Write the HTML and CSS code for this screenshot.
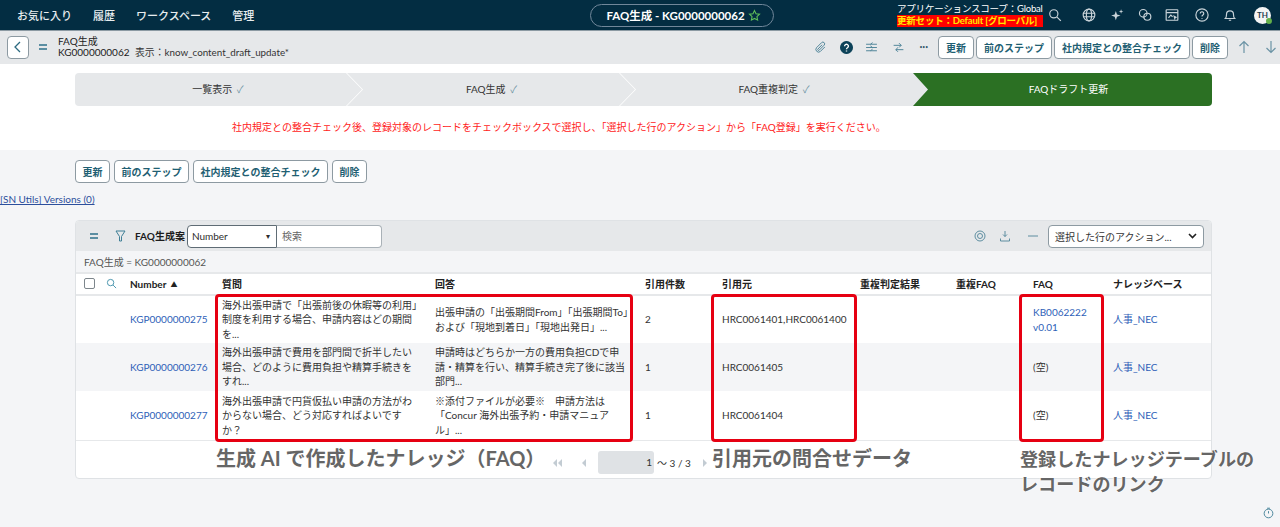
FILE: index.html
```html
<!DOCTYPE html>
<html lang="ja">
<head>
    <meta charset="UTF-8">
    <title>FAQ生成 - KG0000000062</title>
    <link rel="stylesheet" href="styles.css">
</head>
<body>

    <!-- Top nav -->
    <header class="top-nav">
        <nav class="nav-menu">
            <span>お気に入り</span>
            <span>履歴</span>
            <span>ワークスペース</span>
            <span>管理</span>
        </nav>
        <div class="nav-pill">
            FAQ生成 - KG0000000062
            <svg class="pill-star" width="13" height="13" viewBox="0 0 24 24"><path d="M12 3l2.800 5.900 6.400.8-4.700 4.400 1.200 6.400L12 17.400l-5.700 3.100 1.200-6.400-4.700-4.400 6.400-.8z"/></svg>
        </div>
        <div class="nav-scope">
            <div>アプリケーションスコープ：Global</div>
            <div class="scope-set">更新セット：Default [グローバル]</div>
        </div>
        <div class="nav-icons">
            <svg width="14" height="14" viewBox="0 0 24 24"><circle cx="10" cy="10" r="7"/><path d="M15.500 15.500L22 22"/></svg>
            <svg class="ml-20" width="14" height="14" viewBox="0 0 24 24"><circle cx="12" cy="12" r="10"/><ellipse cx="12" cy="12" rx="4.500" ry="10"/><path d="M2 9h20M2 15h20"/></svg>
            <svg class="ml-14" width="14" height="14" viewBox="0 0 24 24"><path class="solid" d="M10 5l2 6 6 2-6 2-2 6-2-6-6-2 6-2zM19 2l1 3 3 1-3 1-1 3-1-3-3-1 3-1z"/></svg>
            <svg class="ml-14" width="14" height="14" viewBox="0 0 24 24"><circle cx="9" cy="9" r="6.500"/><circle cx="16" cy="15" r="6"/></svg>
            <svg class="ml-13" width="14" height="14" viewBox="0 0 24 24"><rect x="2" y="3" width="20" height="18" rx="1"/><path d="M2 8h20M6 17l4-5 3 3"/><path class="solid" d="M14 12l7 4-3 1.500-1.500 3.500z"/></svg>
            <svg class="ml-16" width="14" height="14" viewBox="0 0 24 24"><circle cx="12" cy="12" r="10.500"/><path d="M9 9.500a3 3 0 1 1 4.500 2.600c-1 .6-1.500 1.200-1.500 2.400M12 17v1.500"/></svg>
            <svg class="ml-14" width="14" height="14" viewBox="0 0 24 24"><path d="M4 18c2-2 2-4 2-7a6 6 0 0 1 12 0c0 3 0 5 2 7zM10 21h4"/></svg>
            <div class="avatar">TH<i class="avatar-dot"></i></div>
        </div>
    </header>

    <!-- Record header -->
    <div class="sub-header">
        <button class="back-btn">
            <svg width="10" height="12" viewBox="0 0 10 12"><path d="M7 1L2 6l5 5"/></svg>
        </button>
        <div class="bars"><i></i><i></i></div>
        <div class="record-title">
            <div>FAQ生成</div>
            <div>KG0000000062 <span class="view-name">表示：know_content_draft_update*</span></div>
        </div>
        <div class="sub-actions">
            <svg class="tool" width="13" height="13" viewBox="0 0 24 24"><path d="M20 11l-8.500 8.500a5 5 0 0 1-7-7L14 3a3.300 3.300 0 0 1 4.700 4.700L9.500 17a1.500 1.500 0 0 1-2.200-2.200L15 7"/></svg>
            <svg class="help ml-13" width="13" height="13" viewBox="0 0 24 24"><circle cx="12" cy="12" r="11"/><path class="help-q" d="M8.500 9.500a3.500 3.500 0 1 1 5.300 3c-1.200.7-1.800 1.200-1.800 2.500M12 17.500v2"/></svg>
            <svg class="tool ml-12" width="13" height="13" viewBox="0 0 24 24"><path d="M2 6h20M2 12h20M2 18h20M14 3l-4 3M10 9l4 3M14 15l-4 3"/></svg>
            <svg class="tool ml-14" width="13" height="13" viewBox="0 0 24 24"><path d="M3 8h14M13 4l4 4-4 4M21 16H7M11 12l-4 4 4 4"/></svg>
            <span class="dots ml-14">•••</span>
            <div class="btn-row sub-buttons ml-10">
                <button class="btn">更新</button>
                <button class="btn">前のステップ</button>
                <button class="btn">社内規定との整合チェック</button>
                <button class="btn">削除</button>
            </div>
            <svg class="tool arrow ml-10" width="12" height="14" viewBox="0 0 12 14"><path d="M6 13V2M1.500 6L6 1.500 10.500 6"/></svg>
            <svg class="tool arrow ml-15" width="12" height="14" viewBox="0 0 12 14"><path d="M6 1v11M1.500 8L6 12.500 10.500 8"/></svg>
        </div>
    </div>

    <!-- Stepper and message -->
    <section class="step-area">
        <div class="stepper">
            <div class="step step-1">一覧表示 <span class="check">✓</span></div>
            <div class="step step-2">FAQ生成 <span class="check">✓</span></div>
            <div class="step step-3">FAQ重複判定 <span class="check">✓</span></div>
            <div class="step step-4">FAQドラフト更新</div>
        </div>
        <p class="notice">社内規定との整合チェック後、登録対象のレコードをチェックボックスで選択し、「選択した行のアクション」から「FAQ登録」を実行ください。</p>
    </section>

    <main class="content">
        <div class="btn-row form-buttons">
            <button class="btn">更新</button>
            <button class="btn">前のステップ</button>
            <button class="btn">社内規定との整合チェック</button>
            <button class="btn">削除</button>
        </div>
        <a class="utils-link">[SN Utils] Versions (0)</a>

        <!-- FAQ list -->
        <div class="panel">
            <div class="panel-head">
                <div class="bars"><i></i><i></i></div>
                <svg class="filter-icon" width="11" height="12" viewBox="0 0 11 12"><path d="M1 1h9L6.500 6.500V11h-2V6.500z"/></svg>
                <strong class="panel-title">FAQ生成案</strong>
                <div class="search-group">
                    <div class="search-field">Number<span class="caret">▾</span></div>
                    <div class="search-input">検索</div>
                </div>
                <div class="head-tools">
                    <svg class="tool" width="12" height="12" viewBox="0 0 24 24"><circle cx="12" cy="12" r="10"/><circle cx="12" cy="12" r="5"/></svg>
                    <svg class="tool ml-13" width="12" height="12" viewBox="0 0 24 24"><path d="M12 2v11M8 9l4 4 4-4M3 17v5h18v-5"/></svg>
                    <svg class="tool ml-16" width="12" height="12" viewBox="0 0 24 24"><path d="M2 12h20"/></svg>
                    <div class="action-select">選択した行のアクション...<svg width="9" height="6" viewBox="0 0 9 6"><path d="M1 1l3.500 3.500L8 1"/></svg></div>
                </div>
            </div>
            <div class="crumb">FAQ生成 = KG0000000062</div>
            <table class="faq-table">
                <colgroup>
                    <col class="c-check"><col class="c-num"><col class="c-q"><col class="c-a"><col class="c-count">
                    <col class="c-src"><col class="c-dup"><col class="c-dupfaq"><col class="c-faq"><col class="c-kb">
                </colgroup>
                <thead>
                    <tr>
                        <th>
                            <div class="head-check">
                                <i class="checkbox"></i>
                                <svg width="11" height="11" viewBox="0 0 24 24"><circle cx="10" cy="10" r="7"/><path d="M15.500 15.500L22 22"/></svg>
                            </div>
                        </th>
                        <th>Number <span class="sort">▲</span></th>
                        <th>質問</th>
                        <th>回答</th>
                        <th>引用件数</th>
                        <th>引用元</th>
                        <th>重複判定結果</th>
                        <th>重複FAQ</th>
                        <th>FAQ</th>
                        <th>ナレッジベース</th>
                    </tr>
                </thead>
                <tbody>
                    <tr>
                        <td></td>
                        <td><a>KGP0000000275</a></td>
                        <td class="cell-q">海外出張申請で「出張前後の休暇等の利用」制度を利用する場合、申請内容はどの期間を...</td>
                        <td>出張申請の「出張期間From」「出張期間To」および「現地到着日」「現地出発日」...</td>
                        <td>2</td>
                        <td>HRC0061401,HRC0061400</td>
                        <td></td>
                        <td></td>
                        <td><a>KB0062222<br>v0.01</a></td>
                        <td><a>人事_NEC</a></td>
                    </tr>
                    <tr>
                        <td></td>
                        <td><a>KGP0000000276</a></td>
                        <td class="cell-q">海外出張申請で費用を部門間で折半したい場合、どのように費用負担や精算手続きをすれ...</td>
                        <td>申請時はどちらか一方の費用負担CDで申請・精算を行い、精算手続き完了後に該当部門...</td>
                        <td>1</td>
                        <td>HRC0061405</td>
                        <td></td>
                        <td></td>
                        <td>(空)</td>
                        <td><a>人事_NEC</a></td>
                    </tr>
                    <tr>
                        <td></td>
                        <td><a>KGP0000000277</a></td>
                        <td class="cell-q">海外出張申請で円貨仮払い申請の方法がわからない場合、どう対応すればよいですか？</td>
                        <td>※添付ファイルが必要※　申請方法は「Concur 海外出張予約・申請マニュアル」...</td>
                        <td>1</td>
                        <td>HRC0061404</td>
                        <td></td>
                        <td></td>
                        <td>(空)</td>
                        <td><a>人事_NEC</a></td>
                    </tr>
                </tbody>
            </table>
            <div class="pager">
                <svg width="9" height="8" viewBox="0 0 9 8"><path d="M4 0v8L0 4zM9 0v8L5 4z"/></svg>
                <svg class="ml-20" width="4" height="8" viewBox="0 0 4 8"><path d="M4 0v8L0 4z"/></svg>
                <div class="pager-input">1</div>
                <span class="pager-range">～ 3 / 3</span>
                <svg class="ml-12" width="4" height="8" viewBox="0 0 4 8"><path d="M0 0v8l4-4z"/></svg>
            </div>
        </div>
    </main>

    <!-- Annotations drawn over the screenshot -->
    <div class="mark mark-qa"></div>
    <div class="mark mark-src"></div>
    <div class="mark mark-faq"></div>
    <div class="note note-qa">生成 AI で作成したナレッジ（FAQ）</div>
    <div class="note note-src">引用元の問合せデータ</div>
    <div class="note note-faq">登録したナレッジテーブルの<br>レコードのリンク</div>

    <svg class="timer" width="11" height="12" viewBox="0 0 24 24"><circle cx="12" cy="13" r="9.500"/><path d="M12 8v5M9 1.500h6"/></svg>

</body>
</html>
```

FILE: styles.css
```css
* {
    box-sizing: border-box;
}

html, body {
    margin: 0;
    height: 527px;
    overflow: hidden;
}

body {
    position: relative;
    background: #f4f5f7;
    color: #2e2e2e;
    font-family: Lato, "Noto Sans CJK JP", sans-serif;
    font-size: 10px;
}

svg {
    fill: none;
    stroke: currentColor;
    stroke-width: 2;
    flex: none;
}

.ml-10 { margin-left: 10px; }
.ml-12 { margin-left: 12px; }
.ml-13 { margin-left: 13px; }
.ml-14 { margin-left: 14px; }
.ml-15 { margin-left: 15px; }
.ml-16 { margin-left: 16px; }
.ml-20 { margin-left: 20px; }

/* Top nav */
.top-nav {
    height: 31px;
    background: #032d42;
    color: #e8edf0;
    display: flex;
    align-items: center;
    border-bottom: 1px solid #8c9aa3;
}

.nav-menu {
    width: 590px;
    padding-left: 17px;
    display: flex;
    gap: 21px;
    font-size: 11px;
    font-weight: 500;
}

.nav-pill {
    width: 184px;
    height: 23px;
    padding-left: 3px;
    border: 1px solid #71879a;
    border-radius: 12px;
    display: flex;
    align-items: center;
    justify-content: center;
    gap: 3px;
    color: #fff;
    font-size: 11.500px;
    font-weight: 700;
}

.pill-star {
    color: #5fbf5a;
}

.nav-scope {
    width: 146px;
    margin-left: 123px;
    font-size: 9.500px;
    letter-spacing: -0.2px;
    line-height: 12px;
    color: #fff;
    white-space: nowrap;
}

.scope-set {
    background: #ff0000;
    color: #ffe600;
    font-weight: 700;
}

.nav-icons {
    display: flex;
    align-items: center;
    margin-left: 5px;
    color: #c9d3d9;
}

.nav-icons .solid {
    fill: currentColor;
    stroke: none;
}

.avatar {
    position: relative;
    width: 17px;
    height: 17px;
    margin-left: 17px;
    border-radius: 50%;
    background: #f4f5f5;
    color: #1d3b4c;
    font-size: 8px;
    font-weight: 700;
    text-align: center;
    line-height: 17px;
}

.avatar-dot {
    position: absolute;
    right: -1px;
    bottom: 0;
    width: 6px;
    height: 6px;
    border-radius: 50%;
    background: #63b04a;
}

/* Record header */
.sub-header {
    height: 33px;
    background: #e6e8ea;
    display: flex;
    align-items: center;
    padding: 0 0 1px 7px;
}

.back-btn {
    width: 22px;
    height: 23px;
    padding: 0;
    border: 1px solid #8d9aa2;
    border-radius: 4px;
    background: #fff;
    color: #2c6a80;
    display: flex;
    align-items: center;
    justify-content: center;
}

.back-btn svg {
    stroke-width: 1.300;
}

.bars {
    display: flex;
    flex-direction: column;
    gap: 2px;
    width: 8px;
    margin-left: 10px;
}

.bars i {
    height: 2px;
    background: #5b8ea2;
}

.record-title {
    margin-left: 11px;
    font-size: 10px;
    line-height: 11px;
    color: #1c1c1c;
    white-space: nowrap;
}

.view-name {
    margin-left: 3px;
    font-size: 9.800px;
    color: #333;
}

.sub-actions {
    margin-left: auto;
    display: flex;
    align-items: center;
    padding-right: 3px;
}

.tool {
    color: #4f8599;
    stroke-width: 1.800;
}

.arrow {
    color: #6b93a5;
    stroke-width: 1.200;
}

.help {
    color: #0c4259;
    fill: #0c4259;
}

.help-q {
    stroke: #fff;
    stroke-width: 2.600;
    fill: none;
}

.dots {
    font-size: 5px;
    color: #33586a;
}

.btn-row {
    display: flex;
    gap: 4px;
}

.btn {
    height: 23px;
    padding: 0 6.500px;
    border: 1px solid #8d9aa2;
    border-radius: 4px;
    background: #fff;
    color: #1f5f73;
    font-family: inherit;
    font-size: 10px;
    font-weight: 700;
    white-space: nowrap;
}

.sub-buttons {
    gap: 2px;
}

.sub-buttons .btn {
    padding: 0 7px;
}

/* Stepper */
.step-area {
    height: 86px;
    background: #fff;
    padding: 9px 0 0 75px;
}

.stepper {
    width: 1137px;
    height: 33px;
    display: flex;
    background: #e6e8ea;
    border-radius: 4px;
    overflow: hidden;
    line-height: 33px;
    text-align: center;
    color: #333;
}

.step {
    position: relative;
    flex: none;
}

.step::after {
    content: "";
    position: absolute;
    top: 0;
    right: -16px;
    width: 17px;
    height: 100%;
    background: #fff;
    clip-path: polygon(0 0, 1px 0, 100% 50%, 1px 100%, 0 100%, calc(100% - 1px) 50%);
}

.step-1 { width: 272px; padding-left: 14px; }
.step-2 { width: 273px; padding-left: 16px; }
.step-3 { width: 293px; padding-left: 15px; }

.step-3::after {
    display: none;
}

.step-4 {
    width: 299px;
    padding-left: 12px;
    background: #2b7023;
    color: #fff;
    clip-path: polygon(0 0, 100% 0, 100% 100%, 0 100%, 15px 50%);
}

.step-4::after {
    display: none;
}

.check {
    margin-left: 2px;
    color: #6d93a3;
}

.notice {
    margin: 12px 0 0 157px;
    font-size: 10px;
    line-height: 18px;
    color: #ff1a1a;
    white-space: nowrap;
}

/* Main content */
.content {
    padding-top: 10px;
}

.form-buttons {
    margin-left: 75px;
}

.utils-link {
    display: block;
    margin-top: 9px;
    font-size: 10px;
    line-height: 14px;
    color: #2c4f9c;
    text-decoration: underline;
}

.panel {
    width: 1137px;
    height: 259px;
    margin: 14px 0 0 75px;
    border: 1px solid #dfe2e5;
    border-radius: 4px;
    background: #fff;
    overflow: hidden;
}

.panel-head {
    height: 30px;
    background: #e6e8ea;
    display: flex;
    align-items: center;
    padding-left: 4px;
}

.filter-icon {
    margin-left: 17px;
    color: #3f7f96;
    stroke-width: 1;
}

.panel-title {
    margin: 0 0 1px 9px;
    color: #1c1c1c;
}

.search-group {
    display: flex;
    margin-left: 2px;
}

.search-field {
    width: 90px;
    height: 23px;
    padding: 0 6px 0 4px;
    display: flex;
    align-items: center;
    justify-content: space-between;
    background: #fff;
    border: 1px solid #5f6c75;
    border-radius: 4px 0 0 4px;
}

.caret {
    font-size: 8px;
}

.search-input {
    width: 105px;
    height: 23px;
    padding-left: 5px;
    line-height: 21px;
    background: #fff;
    border: 1px solid #a9b1b7;
    border-left: 0;
    border-radius: 0 4px 4px 0;
    color: #666;
}

.head-tools {
    margin-left: auto;
    display: flex;
    align-items: center;
    padding-right: 7px;
}

.action-select {
    width: 156px;
    height: 23px;
    margin-left: 9px;
    padding: 0 6px;
    display: flex;
    align-items: center;
    justify-content: space-between;
    background: #fff;
    border: 1px solid #8d9aa2;
    border-radius: 4px;
    color: #333;
}

.action-select svg {
    stroke-width: 1.600;
    color: #222;
}

.crumb {
    height: 21px;
    padding-left: 8px;
    line-height: 22px;
    background: #f4f5f7;
    color: #555;
}

.faq-table {
    width: 1135px;
    border-collapse: collapse;
    table-layout: fixed;
}

.c-check { width: 48px; }
.c-num { width: 92px; }
.c-q { width: 213px; }
.c-a { width: 210px; }
.c-count { width: 77px; }
.c-src { width: 138px; }
.c-dup { width: 96px; }
.c-dupfaq { width: 77px; }
.c-faq { width: 80px; }
.c-kb { width: 104px; }

.faq-table th {
    height: 22px;
    padding: 0 6px 1px;
    text-align: left;
    font-weight: 700;
    color: #222;
    border-top: 2px solid #e6e8ea;
    border-bottom: 2px solid #e6e8ea;
    white-space: nowrap;
}

.faq-table td {
    height: 48px;
    padding: 0 6px;
    line-height: 14.500px;
    color: #333;
}

.faq-table td.cell-q {
    padding-right: 11px;
}

.faq-table tbody tr:nth-child(2) {
    background: #f4f5f7;
}

.faq-table tbody tr:last-child {
    border-bottom: 1px solid #e6e8ea;
}

.faq-table tbody tr:last-child td {
    height: 49px;
}

.faq-table a {
    color: #2e5fb8;
}

.head-check {
    display: flex;
    align-items: center;
    gap: 11px;
    padding-left: 2px;
    color: #3f8fa8;
}

.checkbox {
    width: 11px;
    height: 11px;
    background: #fff;
    border: 1px solid #7d868c;
    border-radius: 2px;
}

.sort {
    margin-left: 2px;
    font-size: 7px;
    vertical-align: 1px;
}

.pager {
    display: flex;
    align-items: center;
    height: 37px;
    padding: 7px 0 0 477px;
    color: #c3ccd3;
}

.pager svg {
    fill: currentColor;
    stroke: none;
}

.pager-input {
    width: 56px;
    height: 23px;
    margin-left: 12px;
    padding-right: 2px;
    border-radius: 3px;
    background: #dfe2e5;
    color: #333;
    line-height: 23px;
    text-align: right;
}

.pager-range {
    margin-left: 3px;
    color: #333;
    white-space: nowrap;
}

/* Annotations */
.mark {
    position: absolute;
    top: 294px;
    height: 148px;
    border: 3px solid #e60012;
    border-radius: 4px;
}

.mark-qa { left: 215px; width: 418px; }
.mark-src { left: 711px; width: 146px; }
.mark-faq { left: 1019px; width: 85px; }

.note {
    position: absolute;
    color: #666;
    font-size: 20px;
    font-weight: 700;
    line-height: 25px;
    text-shadow: 0 0 2px #fff, 0 0 2px #fff;
    white-space: nowrap;
}

.note-qa { left: 216px; top: 446px; }
.note-src { left: 712px; top: 446px; }
.note-faq { left: 1020px; top: 447px; font-size: 18.100px; }

.timer {
    position: absolute;
    right: 6px;
    bottom: 8px;
    color: #3f7f96;
}
```
